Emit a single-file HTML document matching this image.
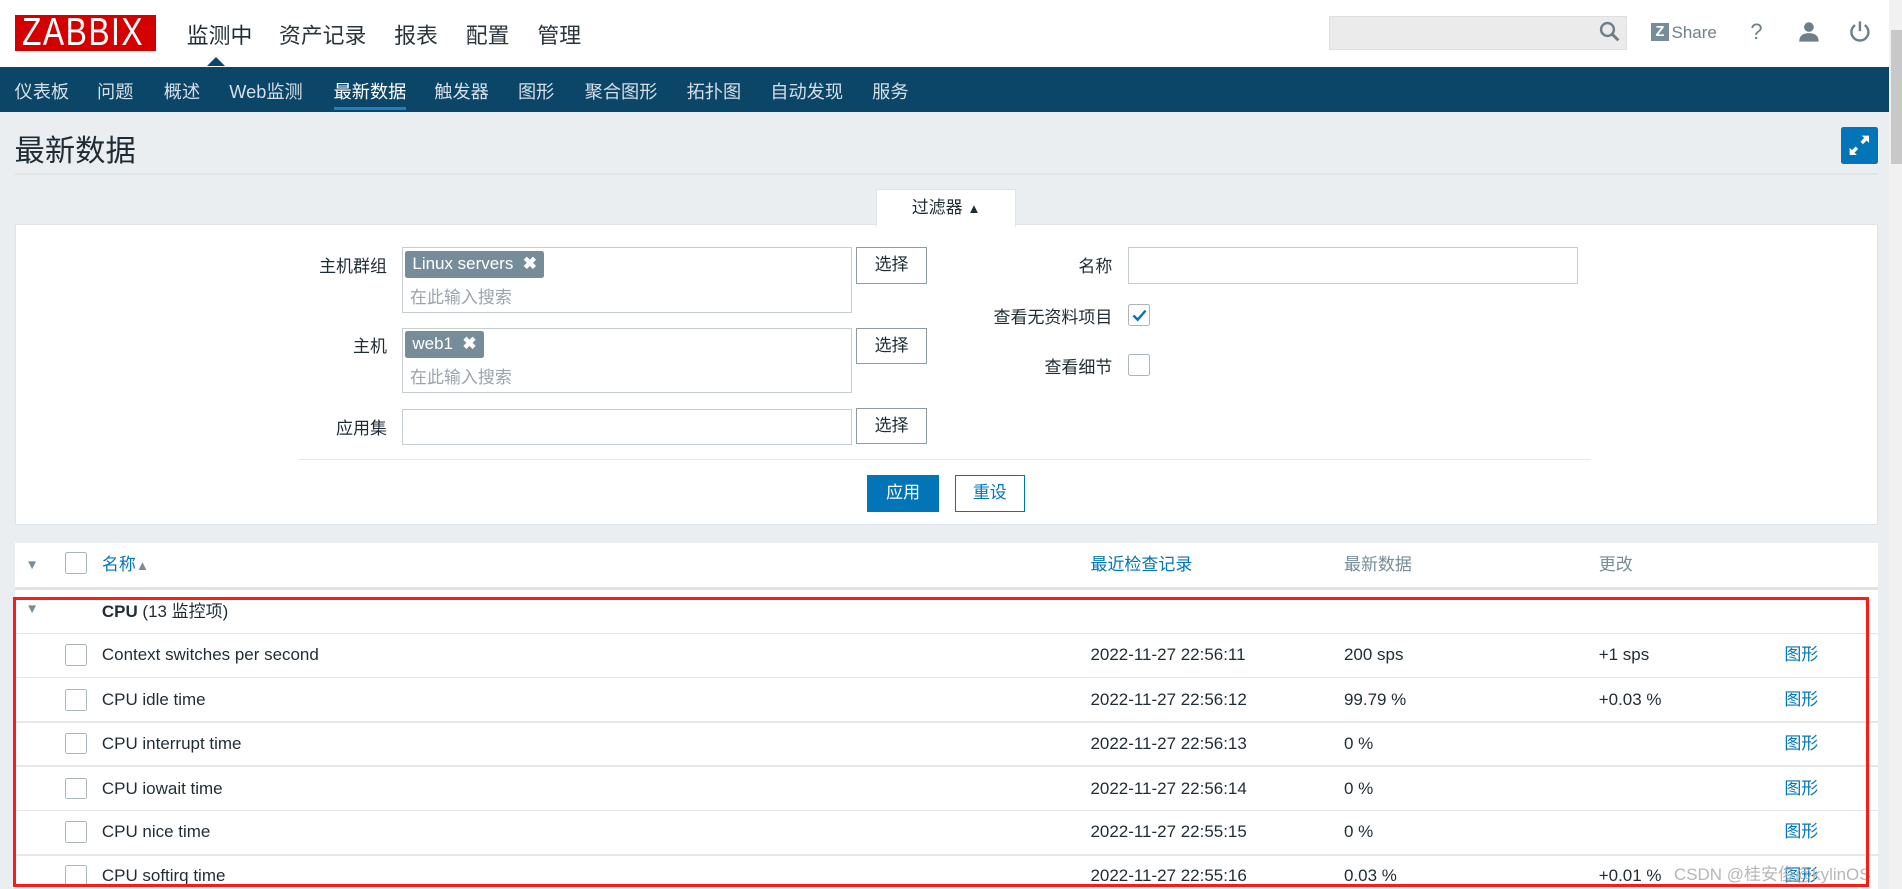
<!DOCTYPE html>
<html><head><meta charset="utf-8"><style>
html,body{margin:0;padding:0;overflow:hidden;background:#ebeef0}
#w{position:relative;width:1568px;height:733px;zoom:1.21301;font-family:"Liberation Sans","Noto Sans CJK SC",sans-serif;color:#1f2c33;overflow:hidden;background:#ebeef0}
.a{position:absolute;white-space:nowrap}
.hdr{left:0;top:0;width:1557px;height:55px;background:#fff}
.nav{left:0;top:55px;width:1557px;height:37px;background:#0b4669}
.nav span{position:absolute;top:9px;font-size:15px;color:#d6dfe5}
.top span.m{position:absolute;top:16px;font-size:18px;color:#2a353b}
.box{border:1px solid #c5cdd2;background:#fff;box-sizing:border-box}
.btn{border:1px solid #8e9ba3;background:#fff;box-sizing:border-box;font-size:14px;text-align:center;line-height:28px;color:#1f2c33}
.lbl{font-size:14px;text-align:right}
.tag{background:#768d99;color:#fff;font-size:14px;line-height:22px;padding:0 6px;border-radius:2px}
.ph{font-size:14px;color:#9aa4aa}
.cb{width:18px;height:18px;border:1px solid #aab4bb;border-radius:2px;background:#fff;box-sizing:border-box}
.row{position:absolute;left:12px;width:1536px;height:36px;background:#fff;font-size:14px;line-height:36px}
.row span{position:absolute;top:0;white-space:nowrap}
.row .cb{position:absolute;left:42px;top:9px}
.hl{position:absolute;left:12px;width:1536px;height:1.3px;background:#e4e8eb}
.lnk{color:#0275b8}
</style></head><body><div id="w">
<div class="a hdr top">
 <div class="a" style="left:12px;top:12px;width:117px;height:30px;background:#d40000;overflow:hidden"><div style="color:#fff;font-size:32px;line-height:30px;transform:scaleX(0.82);transform-origin:0 0;margin-left:6px;letter-spacing:1.5px">ZABBIX</div></div>
 <span class="m" style="left:154px;color:#1f2c33">监测中</span>
 <span class="m" style="left:230px">资产记录</span>
 <span class="m" style="left:325px">报表</span>
 <span class="m" style="left:384px">配置</span>
 <span class="m" style="left:443px">管理</span>
 <div class="a" style="left:171px;top:47px;width:0;height:0;border-left:8px solid transparent;border-right:8px solid transparent;border-bottom:8px solid #0b4669"></div>
 <div class="a" style="left:1096px;top:13px;width:245px;height:28px;background:#ebebeb;border:1px solid #e0e0e0;box-sizing:border-box"></div>
 <svg class="a" style="left:1318px;top:17px" width="18" height="18" viewBox="0 0 18 18"><circle cx="7" cy="7" r="5.3" fill="none" stroke="#6f7f88" stroke-width="2"/><path d="M11 11l5 5" stroke="#6f7f88" stroke-width="2.4"/></svg>
 <div class="a" style="left:1361px;top:19px;width:15px;height:15px;background:#768d99;color:#fff;font-size:12px;font-weight:bold;text-align:center;line-height:15px">Z</div>
 <span class="a" style="left:1378px;top:19px;font-size:14px;color:#6f7f88">Share</span>
 <span class="a" style="left:1443px;top:16px;font-size:18px;color:#6f7f88">?</span>
 <svg class="a" style="left:1482px;top:17px" width="18" height="18" viewBox="0 0 18 18"><circle cx="9" cy="5" r="4" fill="#6f7f88"/><path d="M1 17c0-5 3-7 8-7s8 2 8 7z" fill="#6f7f88"/></svg>
 <svg class="a" style="left:1524px;top:16px" width="18" height="20" viewBox="0 0 18 20"><path d="M5 5a7 7 0 1 0 8 0" fill="none" stroke="#6f7f88" stroke-width="2"/><path d="M9 2v8" stroke="#6f7f88" stroke-width="2"/></svg>
</div>
<div class="a nav">
 <span style="left:12px">仪表板</span><span style="left:80px">问题</span><span style="left:135px">概述</span><span style="left:189px">Web监测</span>
 <span style="left:275px;color:#fff">最新数据</span><span style="left:358px">触发器</span><span style="left:427px">图形</span><span style="left:482px">聚合图形</span>
 <span style="left:566px">拓扑图</span><span style="left:635px">自动发现</span><span style="left:719px">服务</span>
 <div class="a" style="left:275px;top:33px;width:60px;height:3px;background:#1f80c4"></div>
</div>
<div class="a" style="left:1557px;top:0;width:11px;height:733px;background:#f1f1f1"></div>
<div class="a" style="left:1559px;top:25px;width:9px;height:110px;background:#c8c8c8"></div>
<span class="a" style="left:12px;top:104px;font-size:25px;color:#1f2c33">最新数据</span>
<div class="a" style="left:1518px;top:105px;width:30px;height:30px;background:#0275b8;border-radius:2px"></div>
<svg class="a" style="left:1522px;top:109px" width="22" height="22" viewBox="0 0 22 22"><path d="M13 3h6v6l-2-2-3 3-2-2 3-3zM9 19H3v-6l2 2 3-3 2 2-3 3z" fill="#fff"/></svg>
<div class="a" style="left:12px;top:143px;width:1536px;height:1px;background:#dfe4e7"></div>
<!-- filter -->
<div class="a" style="left:12px;top:185px;width:1536px;height:248px;background:#fff;border:1px solid #dfe4e7;box-sizing:border-box"></div>
<div class="a" style="left:722px;top:156px;width:116px;height:31px;background:#fff;border:1px solid #dfe4e7;border-bottom:none;box-sizing:border-box;font-size:14px;text-align:center;line-height:30px">过滤器 <span style="font-size:11px">▲</span></div>
<div class="a lbl" style="left:219px;top:208px;width:100px">主机群组</div>
<div class="a box" style="left:331px;top:204px;width:371px;height:54px"></div>
<div class="a tag" style="left:334px;top:207px">Linux servers &nbsp;<b>✖</b></div>
<div class="a ph" style="left:338px;top:233px">在此输入搜索</div>
<div class="a btn" style="left:706px;top:204px;width:58px;height:30px">选择</div>
<div class="a lbl" style="left:219px;top:274px;width:100px">主机</div>
<div class="a box" style="left:331px;top:270px;width:371px;height:54px"></div>
<div class="a tag" style="left:334px;top:273px">web1 &nbsp;<b>✖</b></div>
<div class="a ph" style="left:338px;top:299px">在此输入搜索</div>
<div class="a btn" style="left:706px;top:270px;width:58px;height:30px">选择</div>
<div class="a lbl" style="left:219px;top:341px;width:100px">应用集</div>
<div class="a box" style="left:331px;top:337px;width:371px;height:30px"></div>
<div class="a btn" style="left:706px;top:336px;width:58px;height:30px">选择</div>
<div class="a lbl" style="left:717px;top:208px;width:200px">名称</div>
<div class="a box" style="left:930px;top:204px;width:371px;height:30px"></div>
<div class="a lbl" style="left:717px;top:250px;width:200px">查看无资料项目</div>
<div class="a cb" style="left:930px;top:251px"></div>
<svg class="a" style="left:932px;top:253px" width="14" height="14" viewBox="0 0 14 14"><path d="M2 7l3.5 3.5L12 3" fill="none" stroke="#0275b8" stroke-width="2"/></svg>
<div class="a lbl" style="left:717px;top:291px;width:200px">查看细节</div>
<div class="a cb" style="left:930px;top:292px"></div>
<div class="a" style="left:246px;top:378px;width:1066px;height:1px;background:#e4e8eb"></div>
<div class="a btn" style="left:715px;top:392px;width:59px;height:30px;background:#0275b8;border-color:#0275b8;color:#fff">应用</div>
<div class="a btn" style="left:787px;top:392px;width:58px;height:30px;border-color:#0275b8;color:#0275b8">重设</div>
<!-- table -->
<div class="row" style="top:448px">
 <span style="left:9px;font-size:11px;color:#768d99">▼</span><div class="cb" style="top:7px"></div>
 <span class="lnk" style="left:72px;top:0">名称<span style="position:static;color:#768d99;font-size:11px">▲</span></span>
 <span class="lnk" style="left:887px">最近检查记录</span>
 <span style="left:1096px;color:#768d99">最新数据</span>
 <span style="left:1306px;color:#768d99">更改</span>
</div>
<div class="hl" style="top:484px;height:2.5px;background:#dde3e6"></div>
<div class="row" style="top:486px"><span style="left:9px;top:-2px;font-size:11px;color:#768d99">▼</span><span style="left:72px;top:0"><b>CPU</b> (13 监控项)</span></div>
<div class="row" style="top:522px"><div class="cb"></div><span style="left:72px">Context switches per second</span><span style="left:887px">2022-11-27 22:56:11</span><span style="left:1096px">200 sps</span><span style="left:1306px">+1 sps</span><span class="lnk" style="left:1459px">图形</span></div>
<div class="row" style="top:559px"><div class="cb"></div><span style="left:72px">CPU idle time</span><span style="left:887px">2022-11-27 22:56:12</span><span style="left:1096px">99.79 %</span><span style="left:1306px">+0.03 %</span><span class="lnk" style="left:1459px">图形</span></div>
<div class="row" style="top:595px"><div class="cb"></div><span style="left:72px">CPU interrupt time</span><span style="left:887px">2022-11-27 22:56:13</span><span style="left:1096px">0 %</span><span class="lnk" style="left:1459px">图形</span></div>
<div class="row" style="top:632px"><div class="cb"></div><span style="left:72px">CPU iowait time</span><span style="left:887px">2022-11-27 22:56:14</span><span style="left:1096px">0 %</span><span class="lnk" style="left:1459px">图形</span></div>
<div class="row" style="top:668px"><div class="cb"></div><span style="left:72px">CPU nice time</span><span style="left:887px">2022-11-27 22:55:15</span><span style="left:1096px">0 %</span><span class="lnk" style="left:1459px">图形</span></div>
<div class="row" style="top:704px"><div class="cb"></div><span style="left:72px">CPU softirq time</span><span style="left:887px">2022-11-27 22:55:16</span><span style="left:1096px">0.03 %</span><span style="left:1306px">+0.01 %</span><span class="lnk" style="left:1459px">图形</span></div>
<div class="hl" style="top:521.5px"></div>
<div class="hl" style="top:558px"></div>
<div class="hl" style="top:594.5px"></div>
<div class="hl" style="top:631px"></div>
<div class="hl" style="top:667.5px"></div>
<div class="hl" style="top:704px"></div>
<span class="a" style="left:1380px;top:709px;font-size:14px;color:rgba(175,175,175,0.9)">CSDN @桂安俊@kylinOS</span>
<div class="a" style="left:11px;top:492px;width:1530px;height:239px;border:3px solid #ff1a1a;box-sizing:border-box"></div>
</div></body></html>
